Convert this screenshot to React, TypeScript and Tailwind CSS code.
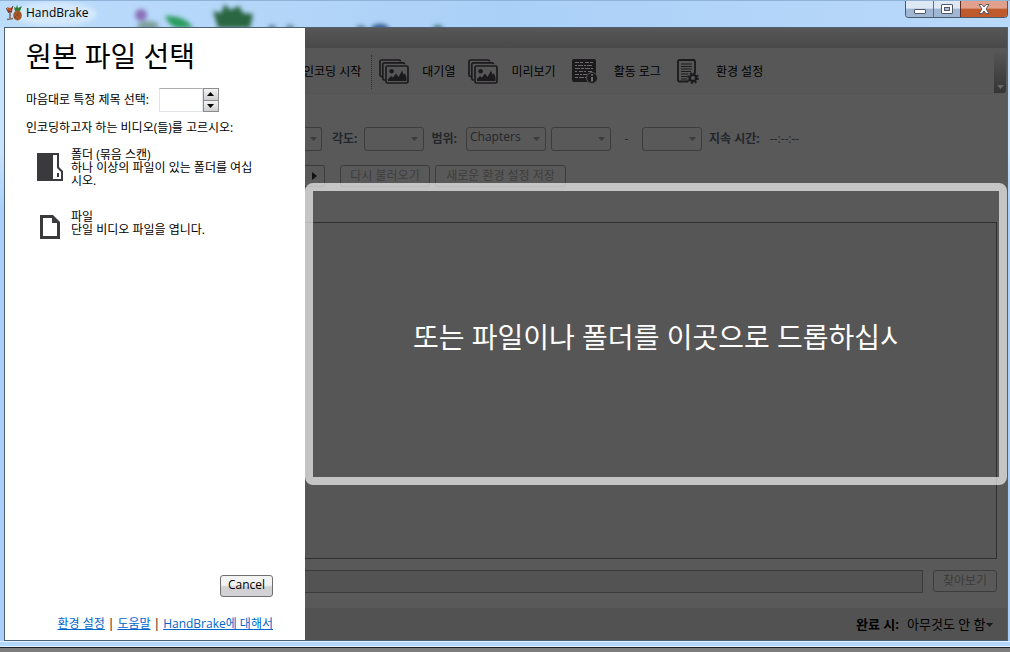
import type { ReactNode } from 'react';

const textFont = "font-['Open_Sans','Noto_Sans_CJK_KR',sans-serif]";

function AppIcon() {
    return (
        <svg viewBox="0 0 16 16" className="h-4 w-4" aria-hidden="true">
            <path d="M1 2l3 1 3-1-1 5-2 1-2-1z" fill="#c8502e" />
            <path d="M0 3l3 5M7 1L5 5M2 6l4 1" stroke="#5a3a2c" strokeWidth="1" />
            <path d="M4 8v5M1 14.500l6-1" stroke="#7a6a66" strokeWidth="1.6" />
            <path d="M9 6l-1-4 2 1 1-3 1 3 4-2-2 5z" fill="#2f7d3a" />
            <ellipse cx="11.5" cy="10.500" rx="4.300" ry="5" fill="#a85b28" />
            <path d="M8.500 8l6 5M8 11l4 4M11 6.500l4 4M14 7l-6 6" stroke="#7d421d" strokeWidth=".6" />
        </svg>
    );
}

function DesktopGlow() {
    return (
        <svg className="pointer-events-none absolute inset-y-0 left-0 h-full w-[480px]" aria-hidden="true">
            <defs>
                <filter id="glow" x="-50%" y="-50%" width="200%" height="200%">
                    <feGaussianBlur stdDeviation="2" />
                </filter>
            </defs>
            <ellipse cx="55" cy="13" rx="42" ry="12" fill="#e6f3ff" opacity=".6" filter="url(#glow)" />
            <g filter="url(#glow)">
                <circle cx="141" cy="14" r="6" fill="#8a70b8" />
                <ellipse cx="148" cy="25" rx="11" ry="5" fill="#7f9f9c" />
                <path d="M165 15q20-1 28 12h-17q-8-4-11-12z" fill="#299c5d" />
                <path d="M213 10l8 2 4-9 5 6 9-4 4 7 10 1-3 14h-32z" fill="#2b6643" />
                <ellipse cx="272" cy="27" rx="4" ry="3" fill="#5b8097" />
                <ellipse cx="290" cy="27" rx="4" ry="3" fill="#5b8097" />
                <ellipse cx="361" cy="27" rx="5" ry="3" fill="#62859b" />
                <ellipse cx="380" cy="27" rx="9" ry="4" fill="#36598e" />
                <ellipse cx="438" cy="27" rx="5" ry="3" fill="#45737a" />
            </g>
        </svg>
    );
}

function PicturesIcon() {
    return (
        <svg viewBox="0 0 30 25" className="h-[25px] w-[30px] shrink-0" fill="none" stroke="#1c1a1d" strokeWidth="1.7" aria-hidden="true">
            <path d="M3.500 17.500H2.500a1.500 1.500 0 0 1-1.500-1.500V2.500A1.500 1.500 0 0 1 2.500 1H20a1.500 1.500 0 0 1 1.500 1.500" />
            <path d="M6 21H5.300a1.500 1.500 0 0 1-1.500-1.500V5.300a1.500 1.500 0 0 1 1.500-1.500H24a1.500 1.500 0 0 1 1.500 1.500" />
            <rect x="7" y="7" width="22" height="17" rx="1.500" />
            <circle cx="12.600" cy="12.200" r="2.300" fill="#1c1a1d" stroke="none" />
            <path d="M9 22v-2l3-3 2 1.500 3-4 2.500 3.500 2-3.500 1.500-3 1.500 4 1.500-1 1.500 4v3.500z" fill="#1c1a1d" stroke="none" />
        </svg>
    );
}

function LogIcon() {
    return (
        <svg viewBox="0 0 26 25" className="h-[25px] w-[26px] shrink-0" aria-hidden="true">
            <rect x="0" y="0" width="24" height="23" rx="2" fill="#1c1a1d" />
            <g stroke="#6a6a6a" strokeWidth="1" fill="none">
                <path d="M3 3.500h18" strokeDasharray="4 1 3 2" />
                <path d="M3 6.500h18" strokeDasharray="2 1 5 1" />
                <path d="M3 9.500h18" strokeDasharray="5 1 3 1" />
                <path d="M3 12.500h18" strokeDasharray="2 2 4 1" />
                <path d="M3 15.500h12" strokeDasharray="4 1 2 1" />
                <path d="M3 18.500h11" strokeDasharray="3 1 5 1" />
            </g>
            <circle cx="20" cy="19" r="5.500" fill="#1c1a1d" stroke="#575757" strokeWidth="1" />
            <path d="M20 18v4.500M20 15.200v1.600" stroke="#777777" strokeWidth="1.800" />
        </svg>
    );
}

function OptionsIcon() {
    return (
        <svg viewBox="0 0 23 25" className="h-[25px] w-[23px] shrink-0" fill="none" stroke="#1c1a1d" aria-hidden="true">
            <path d="M11 22.500H2.500A1.500 1.500 0 0 1 1 21V2.500A1.500 1.500 0 0 1 2.500 1h14A1.500 1.500 0 0 1 18 2.500V14" strokeWidth="1.800" />
            <path d="M4 5h11M4 7.500h11M4 10h11M4 12.500h10M4 15h7M4 17.500h6M4 20h6" />
            <circle cx="16" cy="19" r="3.200" strokeWidth="2.400" />
            <circle cx="16" cy="19" r="5" strokeWidth="1.800" strokeDasharray="2 1.927" />
        </svg>
    );
}

function FolderIcon() {
    return (
        <svg viewBox="0 0 26 28" className="h-7 w-[26px]" aria-hidden="true">
            <path d="M0 0h22v14l4 4v10H0z" fill="#3a3a3c" />
            <path d="M16 2h4v13l4 4v7h-8z" fill="white" />
            <path d="M20 20h2v4h-2z" fill="#3a3a3c" />
        </svg>
    );
}

function FileIcon() {
    return (
        <svg viewBox="0 0 20 24" className="h-6 w-5" aria-hidden="true">
            <path d="M0 0h13l7 7v17H0z" fill="#3a3a3c" />
            <path d="M3 3h9v5h5v13H3z" fill="white" />
        </svg>
    );
}

function Caret({ className }: { className: string }) {
    return (
        <svg viewBox="0 0 7 4" className={className} fill="currentColor" aria-hidden="true">
            <path d="M0 0h7L3.500 4z" />
        </svg>
    );
}

function Combo({ id, label, width, value = '' }: { id: string; label?: string; width: string; value?: string }) {
    return (
        <div className={`relative h-6 shrink-0 ${width}`}>
            <select
                id={id}
                aria-label={label}
                disabled
                className="h-full w-full appearance-none rounded-[3px] border border-[#3d3d3d] bg-transparent px-[3px] pb-1 text-xs leading-4 text-[#23262b] opacity-100"
            >
                <option>{value}</option>
            </select>
            <Caret className="pointer-events-none absolute top-[10px] right-[6px] h-1 w-[7px] text-[#3b3b3b]" />
        </div>
    );
}

function ToolButton({ icon, gap = 'gap-[13px]', children }: { icon: ReactNode; gap?: string; children: ReactNode }) {
    return (
        <button type="button" className={`flex shrink-0 items-center ${gap}`}>
            {icon}
            <span>{children}</span>
        </button>
    );
}

const sources = [
    {
        title: '폴더 (묶음 스캔)',
        description: '하나 이상의 파일이 있는 폴더를 여십시오.',
        icon: <FolderIcon />,
    },
    {
        title: '파일',
        description: '단일 비디오 파일을 엽니다.',
        icon: <FileIcon />,
    },
];

function TitleBar() {
    return (
        <header className="relative flex h-[27px] shrink-0 items-start justify-between overflow-hidden border-t border-[#8fb4d8] bg-linear-to-r from-[#bcdcfb] via-[#abd0f7] to-[#b9d9fa]">
            <DesktopGlow />
            <div className="relative flex h-6 items-center gap-1 pl-[6px] text-xs text-black">
                <AppIcon />
                HandBrake
            </div>
            <div className="relative mr-[2px] flex h-[17px] overflow-hidden rounded-b-[4px] border border-t-0 border-[#4b5a6c]">
                <button type="button" aria-label="Minimize" className="flex w-7 items-center justify-center border-r border-[#5d6f86] bg-linear-to-b from-[#dfe9f5] from-45% to-[#9fb7d3] to-50% pt-1">
                    <span className="h-[5px] w-3 rounded-[1px] border border-[#535666] bg-white" />
                </button>
                <button type="button" aria-label="Maximize" className="flex w-[27px] items-center justify-center border-r border-[#5d2b20] bg-linear-to-b from-[#dfe9f5] from-45% to-[#9fb7d3] to-50%">
                    <span className="flex h-[10px] w-3 items-center justify-center rounded-[1px] border border-[#535666] bg-white">
                        <span className="h-1 w-[6px] border border-[#535666] bg-[#a9bdd6]" />
                    </span>
                </button>
                <button type="button" aria-label="Close" className="flex w-[46px] items-center justify-center bg-linear-to-b from-[#e0a08c] from-45% to-[#bf5a2c] to-50%">
                    <svg viewBox="0 0 12 10" className="h-[10px] w-3" aria-hidden="true">
                        <path d="M1 .5h3L6 3 8 .5h3L8 5l3 4.500H8L6 7 4 9.500H1L4 5z" fill="white" stroke="#4c4f60" strokeWidth=".9" />
                    </svg>
                </button>
            </div>
        </header>
    );
}

function SourcePanel() {
    return (
        <aside className="flex w-[300px] shrink-0 flex-col bg-white pr-8 pl-[21px] text-xs text-black">
            <h1 className="mt-2 text-[28px] leading-10">원본 파일 선택</h1>
            <div className="mt-3 flex h-6 items-center gap-[10px]">
                <label htmlFor="title-number">마음대로 특정 제목 선택:</label>
                <div className="flex h-6">
                    <input id="title-number" type="text" inputMode="numeric" className="w-11 border border-[#e0e4ea] border-t-[#abadb3] bg-white px-1" />
                    <div className="flex w-4 flex-col">
                        <button type="button" aria-label="Increase" className="flex flex-1 items-center justify-center border border-[#8c8c8c] bg-linear-to-b from-[#f3f3f3] to-[#cfcfcf]">
                            <Caret className="h-1 w-[7px] rotate-180" />
                        </button>
                        <button type="button" aria-label="Decrease" className="flex flex-1 items-center justify-center border border-t-0 border-[#8c8c8c] bg-linear-to-b from-[#f3f3f3] to-[#cfcfcf]">
                            <Caret className="h-1 w-[7px]" />
                        </button>
                    </div>
                </div>
            </div>
            <p className="mt-2 leading-4">인코딩하고자 하는 비디오(들)를 고르시오:</p>

            <div className="mt-3 flex flex-col gap-[23px] pl-[7px]">
                {sources.map((source) => (
                    <button key={source.title} type="button" className="flex items-start gap-1 text-left leading-[13px]">
                        <span className="flex w-[34px] shrink-0 justify-center pt-[5px]">{source.icon}</span>
                        <span className="w-[190px] break-all">
                            {source.title}
                            <br />
                            {source.description}
                        </span>
                    </button>
                ))}
            </div>

            <div className="mt-auto flex justify-end">
                <button type="button" className="h-[22px] w-[53px] rounded-[3px] border border-[#707070] bg-linear-to-b from-[#f3f3f3] from-45% to-[#d2d2d4] to-55% pb-[2px] leading-4">
                    Cancel
                </button>
            </div>
            <nav className="mt-[19px] mb-2 flex justify-end gap-[3px] leading-4 whitespace-nowrap">
                <a href="#options" className="text-[#0066cc] underline">환경 설정</a>
                <span>|</span>
                <a href="#help" className="text-[#0066cc] underline">도움말</a>
                <span>|</span>
                <a href="#about" className="text-[#0066cc] underline">HandBrake에 대해서</a>
            </nav>
        </aside>
    );
}

function DropZone() {
    return (
        <div className="pointer-events-none absolute inset-0 flex items-center">
            <div className="h-[302px] w-full rounded-[8px] border-8 border-white/65 px-[100px] pt-[126px]">
                <p className="overflow-hidden text-[28px] leading-10 whitespace-nowrap text-white">
                    또는 파일이나 폴더를 이곳으로 드롭하십시오
                </p>
            </div>
        </div>
    );
}

function MainArea() {
    return (
        <main className="relative flex min-w-0 flex-1 flex-col overflow-hidden bg-[#595959] text-xs text-[#23262b]">
            <div className="h-5 shrink-0 bg-linear-to-b from-[#575757] to-[#494949]" />
            <div className="flex h-[46px] shrink-0 items-stretch justify-between border-b border-[#545454] bg-[#575757] text-black">
                <div className="-ml-[2px] flex items-center pt-[2px] whitespace-nowrap">
                    <button type="button">인코딩 시작</button>
                    <span className="mr-[7px] ml-[10px] h-[34px] border-l border-dotted border-[#2f2f2f]" />
                    <div className="flex items-center gap-[13px]">
                        <ToolButton icon={<PicturesIcon />}>대기열</ToolButton>
                        <ToolButton icon={<PicturesIcon />}>미리보기</ToolButton>
                    </div>
                    <div className="ml-4 flex items-center gap-4">
                        <ToolButton icon={<LogIcon />} gap="gap-4">활동 로그</ToolButton>
                        <ToolButton icon={<OptionsIcon />} gap="gap-4">환경 설정</ToolButton>
                    </div>
                </div>
                <button type="button" aria-label="More" className="mt-1 mr-px flex w-3 items-end justify-center rounded-r-[3px] bg-linear-to-b from-[#555555] to-[#353535] pb-1">
                    <Caret className="h-1 w-[7px] text-[#666666]" />
                </button>
            </div>

            <div className="mt-[33px] flex h-6 shrink-0 items-center whitespace-nowrap">
                <div className="flex h-6 w-[17px] items-center justify-center rounded-r-[3px] border border-l-0 border-[#3d3d3d]">
                    <Caret className="h-1 w-[7px] text-[#3b3b3b]" />
                </div>
                <label htmlFor="angle" className="mr-[6px] ml-[10px] font-bold">각도:</label>
                <Combo id="angle" width="w-[60px]" />
                <label htmlFor="range" className="mr-[9px] ml-2 font-bold">범위:</label>
                <Combo id="range" width="w-20" value="Chapters" />
                <div className="ml-[5px] flex items-center">
                    <Combo id="range-start" label="시작" width="w-[60px]" />
                    <span className="w-[31px] text-center">-</span>
                    <Combo id="range-end" label="끝" width="w-[60px]" />
                </div>
                <span className="mr-[10px] ml-[7px] font-bold">지속 시간:</span>
                <span>--:--:--</span>
            </div>

            <div className="mt-[14px] flex h-[22px] shrink-0 text-[#3d3d3d]">
                <button type="button" aria-label="Next" className="flex w-5 items-center justify-center rounded-r-[3px] border border-l-0 border-[#3d3d3d]">
                    <svg viewBox="0 0 5 8" className="h-2 w-[5px]" aria-hidden="true">
                        <path d="M0 0l5 4-5 4z" fill="#111111" />
                    </svg>
                </button>
                <button type="button" disabled className="ml-[15px] w-[90px] rounded-[3px] border border-[#3d3d3d]">다시 불러오기</button>
                <button type="button" disabled className="ml-[5px] w-[131px] rounded-[3px] border border-[#3d3d3d]">새로운 환경 설정 저장</button>
            </div>

            <div className="mt-[35px] mr-[10px] flex-1 border border-l-0 border-[#2f2f2f] bg-[#565656]" />

            <div className="mt-[11px] mr-[10px] flex h-[23px] shrink-0 gap-[10px]">
                <input type="text" disabled aria-label="저장 위치" className="min-w-0 flex-1 border border-l-0 border-[#3b3b3b] bg-[#535353] px-1" />
                <button type="button" disabled className="h-[22px] w-16 rounded-[3px] border border-[#3d3d3d] text-[#3b3b3b]">찾아보기</button>
            </div>

            <footer className="mt-[15px] flex h-8 shrink-0 items-center justify-end gap-2 bg-[#525252] pt-[2px] pr-[14px] text-[13px] text-black">
                <label htmlFor="when-done" className="font-bold">완료 시:</label>
                <div className="flex items-center">
                    <select id="when-done" className="appearance-none bg-transparent">
                        <option>아무것도 안 함</option>
                    </select>
                    <Caret className="pointer-events-none h-1 w-[7px] text-[#151515]" />
                </div>
            </footer>

            <DropZone />
        </main>
    );
}

export default function App() {
    return (
        <div className={`flex h-screen flex-col bg-[#7d7d7d] pb-1 ${textFont}`}>
            <div className="flex min-h-0 flex-1 flex-col border-b border-[#1c222a] bg-[#b4d8fc]">
                <TitleBar />
                <div className="flex min-h-0 flex-1 bg-linear-to-b from-[#c9e2fb] from-20% to-[#a8d0fa] to-30% pr-[2px] pl-1">
                    <div className="flex min-w-0 flex-1 border border-[#4d6074]">
                        <SourcePanel />
                        <MainArea />
                    </div>
                </div>
                <div className="h-[6px] shrink-0 border-y border-[#e4f2ff]" />
            </div>
        </div>
    );
}
